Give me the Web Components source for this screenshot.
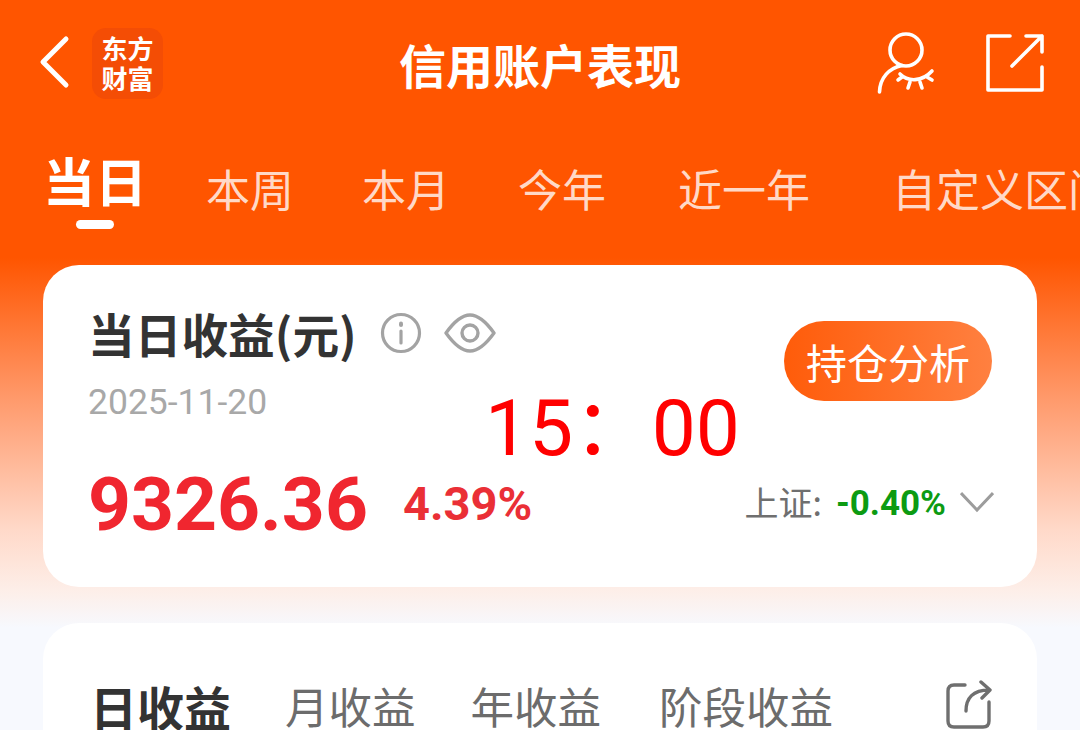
<!DOCTYPE html>
<html lang="zh">
<head>
<meta charset="utf-8">
<title>信用账户表现</title>
<style>
html, body { margin: 0; padding: 0; }
body {
    width: 1080px;
    height: 730px;
    overflow: hidden;
    font-family: "Roboto", "Noto Sans CJK SC", sans-serif;
    background: linear-gradient(#ff5500 0, #ff5500 258px, #ff9a6c 400px, #ffd9c9 530px, #fdeee8 590px, #f7f9fe 628px);
}
</style>
</head>
<body>
<app-header></app-header>
<range-tabs></range-tabs>
<profit-card></profit-card>
<chart-card></chart-card>

<script>
class AppHeader extends HTMLElement {
    constructor() {
        super();
        this.attachShadow({ mode: 'open' });
        this.shadowRoot.innerHTML = `
            <style>
                :host {
                    display: grid;
                    grid-template-columns: 1fr auto 1fr;
                    align-items: center;
                    height: 126px;
                    color: #fff;
                }
                .left { display: flex; align-items: center; padding-left: 38px; gap: 19px; }
                .logo {
                    width: 71px;
                    height: 71px;
                    border-radius: 14px;
                    background: #f44d05;
                    display: flex;
                    flex-direction: column;
                    align-items: center;
                    justify-content: center;
                    font-size: 26px;
                    line-height: 30px;
                    font-weight: 700;
                    font-family: "Noto Sans CJK SC", sans-serif;
                }
                .logo span { display: block; }
                h1 {
                    margin: 0;
                    font-size: 47px;
                    font-weight: 700;
                    font-family: "Noto Sans CJK SC", sans-serif;
                }
                .right { display: flex; justify-content: flex-end; align-items: center; padding-right: 36px; gap: 50px; }
                svg { display: block; fill: none; stroke: #fff; stroke-linecap: round; stroke-linejoin: round; }
            </style>
            <div class="left">
                <svg width="35" height="56" viewBox="0 0 35 56" stroke-width="5"><path d="M28 4 L5 27 L28 50"/></svg>
                <div class="logo"><span>东方</span><span>财富</span></div>
            </div>
            <h1>信用账户表现</h1>
            <div class="right">
                <svg width="60" height="62" viewBox="0 0 60 62" stroke-width="3.6">
                    <circle cx="30" cy="18" r="16"/>
                    <path d="M3.5 60 C4 46 13 36 26 33.5"/>
                    <path d="M24 42 C32 50 46 50 56 39"/>
                    <path d="M26 45 L22 48 M34 50 L32 56 M44 50 L46 56 M51 45 L56 48"/>
                </svg>
                <svg width="58" height="58" viewBox="0 0 58 58" stroke-width="3.6">
                    <path d="M24 2 H2 V56 H56 V33"/>
                    <path d="M26 32 L56 2 M40 2 H56 V18"/>
                </svg>
            </div>
        `;
    }
}
customElements.define('app-header', AppHeader);

class RangeTabs extends HTMLElement {
    constructor() {
        super();
        this.attachShadow({ mode: 'open' });
        this.shadowRoot.innerHTML = `
            <style>
                :host {
                    display: flex;
                    align-items: flex-start;
                    height: 139px;
                    padding-left: 43px;
                    overflow: hidden;
                    white-space: nowrap;
                    color: #ffd9c7;
                    font-family: "Noto Sans CJK SC", sans-serif;
                    font-size: 44px;
                    line-height: 62px;
                }
                span { display: block; flex: none; margin-top: 31px; }
                .on {
                    position: relative;
                    margin-top: 23px;
                    margin-right: 59px;
                    color: #fff;
                    font-size: 52px;
                    font-weight: 700;
                }
                .on::after {
                    content: "";
                    position: absolute;
                    left: 33px;
                    top: 71px;
                    width: 38px;
                    height: 9px;
                    border-radius: 5px;
                    background: #fff;
                }
            </style>
            <span class="on">当日</span>
            <span style="margin-right:68px">本周</span>
            <span style="margin-right:68px">本月</span>
            <span style="margin-right:72px">今年</span>
            <span style="margin-right:82px">近一年</span>
            <span>自定义区间</span>
        `;
    }
}
customElements.define('range-tabs', RangeTabs);

class ProfitCard extends HTMLElement {
    constructor() {
        super();
        this.attachShadow({ mode: 'open' });
        this.shadowRoot.innerHTML = `
            <style>
                :host {
                    display: block;
                    position: relative;
                    box-sizing: border-box;
                    width: 994px;
                    height: 322px;
                    margin-left: 43px;
                    padding: 38px 45px 0 45px;
                    border-radius: 36px;
                    background: #fff;
                }
                .cols { display: flex; justify-content: space-between; }
                .head { display: flex; align-items: center; gap: 23px; height: 60px; }
                h2 {
                    margin: 0;
                    font-size: 46.7px;
                    line-height: 60px;
                    font-weight: 700;
                    color: #333;
                    font-family: "Noto Sans CJK SC", sans-serif;
                }
                .icons { display: flex; align-items: center; gap: 22px; margin-top: 0; }
                svg { display: block; fill: none; stroke: #a3a3a3; }
                .date { font-size: 35.5px; line-height: 40px; margin-top: 19px; color: #a8a8a8; }
                .btn {
                    align-self: flex-start;
                    width: 208px;
                    height: 80px;
                    margin-top: 18px;
                    border-radius: 40px;
                    background: linear-gradient(90deg, #ff5c0a, #ff8040);
                    color: #fff;
                    text-align: center;
                    line-height: 80px;
                    font-size: 41px;
                    font-family: "Noto Sans CJK SC", sans-serif;
                }
                .row { display: flex; align-items: center; justify-content: space-between; margin-top: 37px; }
                .nums { display: flex; align-items: center; gap: 35px; color: #f0262f; font-weight: 700; }
                .val { font-size: 75px; line-height: 90px; }
                .pct { font-size: 47px; line-height: 56px; margin-top: -1px; color: #ea2f36; }
                .idx { display: flex; align-items: center; font-size: 34px; line-height: 44px; color: #6f6f6f; margin-top: -5px; margin-right: -2px; }
                .idx b { color: #0c9b12; font-size: 35px; margin: 5px 14px 0; }
                .idx span { font-family: "Noto Sans CJK SC", sans-serif; }
                .time {
                    position: absolute;
                    left: 442px;
                    top: 118px;
                    font-size: 78.5px;
                    line-height: 90px;
                    color: #f00;
                    font-family: "Roboto", "Noto Sans CJK SC", sans-serif;
                    font-weight: 400;
                    white-space: nowrap;
                }
            </style>
            <div class="cols">
                <div>
                    <div class="head">
                        <h2>当日收益(元)</h2>
                        <div class="icons">
                            <svg width="42" height="42" viewBox="0 0 42 42" stroke-width="3.2" stroke-linecap="round">
                                <circle cx="21" cy="21" r="18.5"/>
                                <path d="M21 19 V31"/>
                                <path d="M21 11.5 V13" stroke-width="4"/>
                            </svg>
                            <svg width="52" height="40" viewBox="0 0 52 40" stroke-width="3.4" stroke-linejoin="round">
                                <path d="M2 20 C12 6 20 2 26 2 C32 2 40 6 50 20 C40 34 32 38 26 38 C20 38 12 34 2 20 Z"/>
                                <circle cx="26" cy="20" r="8"/>
                            </svg>
                        </div>
                    </div>
                    <div class="date">2025-11-20</div>
                </div>
                <div class="btn">持仓分析</div>
            </div>
            <div class="row">
                <div class="nums"><span class="val">9326.36</span><span class="pct">4.39%</span></div>
                <div class="idx">
                    <span>上证:</span><b>-0.40%</b>
                    <svg width="34" height="22" viewBox="0 0 34 22" stroke-width="3"><path d="M1 2 L17 19 L33 2" stroke="#9c9c9c"/></svg>
                </div>
            </div>
            <div class="time">15：00</div>
        `;
    }
}
customElements.define('profit-card', ProfitCard);

class ChartCard extends HTMLElement {
    constructor() {
        super();
        this.attachShadow({ mode: 'open' });
        this.shadowRoot.innerHTML = `
            <style>
                :host {
                    display: flex;
                    align-items: flex-start;
                    justify-content: space-between;
                    box-sizing: border-box;
                    width: 994px;
                    height: 107px;
                    margin: 36px 0 0 43px;
                    padding: 58px 44px 0 47px;
                    border-radius: 36px 36px 0 0;
                    background: #fff;
                    overflow: hidden;
                    font-family: "Noto Sans CJK SC", sans-serif;
                    font-size: 43.5px;
                    line-height: 49px;
                    color: #6c6c6c;
                }
                .tabs { display: flex; }
                .on { color: #333; font-size: 47px; font-weight: 700; margin-right: 54px; }
                .tabs span:nth-child(2) { margin-right: 55px; }
                .tabs span:nth-child(3) { margin-right: 58px; }
                svg { display: block; margin-top: -1px; fill: none; stroke: #6f6f6f; stroke-width: 3.4; stroke-linecap: round; stroke-linejoin: round; }
            </style>
            <div class="tabs">
                <span class="on">日收益</span>
                <span>月收益</span>
                <span>年收益</span>
                <span>阶段收益</span>
            </div>
            <svg width="48" height="50" viewBox="0 0 48 50">
                <path d="M20 5 H9 Q3 5 3 11 V41 Q3 47 9 47 H38 Q44 47 44 41 V22"/>
                <path d="M21 31 C21 18 28 10 44 10 M36 2 L45 10 L37 18"/>
            </svg>
        `;
    }
}
customElements.define('chart-card', ChartCard);
</script>
</body>
</html>
